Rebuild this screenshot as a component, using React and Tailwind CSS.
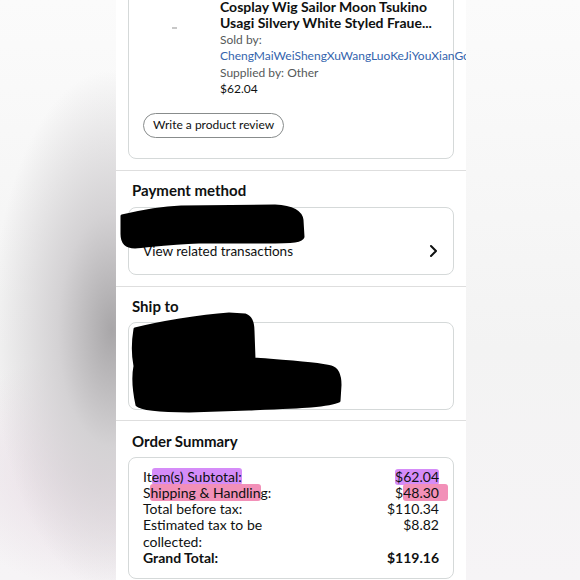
import React from 'react'

const rows = [
  { label: 'Total before tax:', value: '$110.34' },
]

const Divider = () => <div className="h-px w-full bg-[#dedede]" />

const App = () => {
  return (
    <div className="h-[580px] w-[580px] overflow-hidden bg-[radial-gradient(ellipse_120px_260px_at_112px_330px,#a8a6a8_0%,#d4d2d4_45%,rgba(240,240,240,0)_100%),radial-gradient(ellipse_160px_120px_at_100px_470px,#e6d9e2_0%,rgba(246,244,246,0)_100%),linear-gradient(180deg,#fbfbfb_0%,#f3f3f3_60%,#f6f4f6_100%)]">
      <div className="ml-[116px] h-full w-[350px] overflow-hidden bg-white font-['Lato','Noto_Sans',sans-serif] text-[#0f1111]">
        {/* product */}
        <div className="px-3 pb-[11px]">
          <div className="-mt-[30px] rounded-lg border border-[#d5d9d9] pb-[20px] pt-[28px]">
            <div className="flex">
              <div className="flex w-[91px] shrink-0 justify-center pt-[28px]">
                <div className="h-[2px] w-[5px] bg-[#c8c8c8]" />
              </div>
              <div className="min-w-0">
                <div className="text-[14px] font-bold leading-[16px]">
                  Cosplay Wig Sailor Moon Tsukino
                  <br />
                  Usagi Silvery White Styled Fraue...
                </div>
                <div className="mt-[1px] text-[12px] leading-[16.3px]">
                  <div className="text-[#565959]">Sold by:</div>
                  <div className="whitespace-nowrap text-[#3464ad]">ChengMaiWeiShengXuWangLuoKeJiYouXianGongSi</div>
                  <div className="text-[#565959]">Supplied by: Other</div>
                  <div>$62.04</div>
                </div>
              </div>
            </div>
            <div className="mt-[14px] pl-[14px]">
              <div className="inline-flex h-[25px] items-center rounded-full border border-[#888c8c] px-[9px] text-[12px]">
                Write a product review
              </div>
            </div>
          </div>
        </div>
        <Divider />

        {/* payment */}
        <div className="px-3 pb-[11px] pt-[9px]">
          <div className="pl-[4px] text-[15px] font-bold leading-[20px]">Payment method</div>
          <div className="relative mt-[7px] rounded-lg border border-[#d5d9d9] pb-[13px] pl-[14px] pr-[14px] pt-[33px]">
            <div className="flex items-center justify-between text-[13.5px] leading-[20px]">
              <span>View related transactions</span>
              <svg width="12" height="14" viewBox="0 0 12 14" fill="none" stroke="#0f1111" strokeWidth="2" strokeLinecap="round" strokeLinejoin="round">
                <path d="M4 2l5 5-5 5" />
              </svg>
            </div>
            <svg className="absolute left-[-10px] top-[-4px]" width="186" height="46" viewBox="0 0 186 46">
              <path d="M3 12 C20 8 40 4 62 3 L156 2 C174 3 182 8 183 16 L184 33 C183 37 176 38 146 38 L80 38 C50 39 30 42 16 43 C6 43 3 38 3 30 Z" fill="#000" stroke="#000" strokeWidth="3" strokeLinejoin="round" />
            </svg>
          </div>
        </div>
        <Divider />

        {/* ship to */}
        <div className="px-3 pb-[10px] pt-[9px]">
          <div className="pl-[4px] text-[15px] font-bold leading-[20px]">Ship to</div>
          <div className="relative mt-[6px] h-[88px] rounded-lg border border-[#d5d9d9]">
            <svg className="absolute left-0 top-[-12px]" width="220" height="104" viewBox="0 0 220 104">
              <path d="M6 18 C30 12 70 5 100 3 L116 4 C122 6 124 12 124 20 L125 48 C150 50 188 52 202 56 C209 58 211 66 211 74 L210 90 C200 95 170 96 120 98 L60 100 C30 100 12 98 8 94 C5 80 4 65 6 55 C4 45 4 30 6 18 Z" fill="#000" stroke="#000" strokeWidth="3" strokeLinejoin="round" />
            </svg>
          </div>
        </div>
        <Divider />

        {/* summary */}
        <div className="px-3 pt-[10px]">
          <div className="pl-[4px] text-[15px] font-bold leading-[20px]">Order Summary</div>
          <div className="mt-[6px] rounded-lg border border-[#d5d9d9] px-[14px] pb-[12px] pt-[11px] text-[14px] leading-[16.2px]">
            <div className="flex justify-between">
              <span>
                It<span className="rounded-[3px] bg-[#d58cf8]">em(s) Subtotal:</span>
              </span>
              <span className="rounded-[3px] bg-[#d58cf8]">$62.04</span>
            </div>
            <div className="flex justify-between">
              <span>
                S<span className="rounded-[3px] bg-[#f290b8]">hipping &amp; Handlin</span>g:
              </span>
              <span>
                $<span className="-mr-[9px] rounded-[3px] bg-[#f290b8] pr-[9px]">48.30</span>
              </span>
            </div>
            {rows.map(({ label, value }) => (
              <div key={label} className="flex justify-between">
                <span>{label}</span>
                <span>{value}</span>
              </div>
            ))}
            <div className="flex justify-between">
              <span>
                Estimated tax to be
                <br />
                collected:
              </span>
              <span>$8.82</span>
            </div>
            <div className="flex justify-between font-bold">
              <span>Grand Total:</span>
              <span>$119.16</span>
            </div>
          </div>
        </div>
      </div>
    </div>
  )
}

export default App
